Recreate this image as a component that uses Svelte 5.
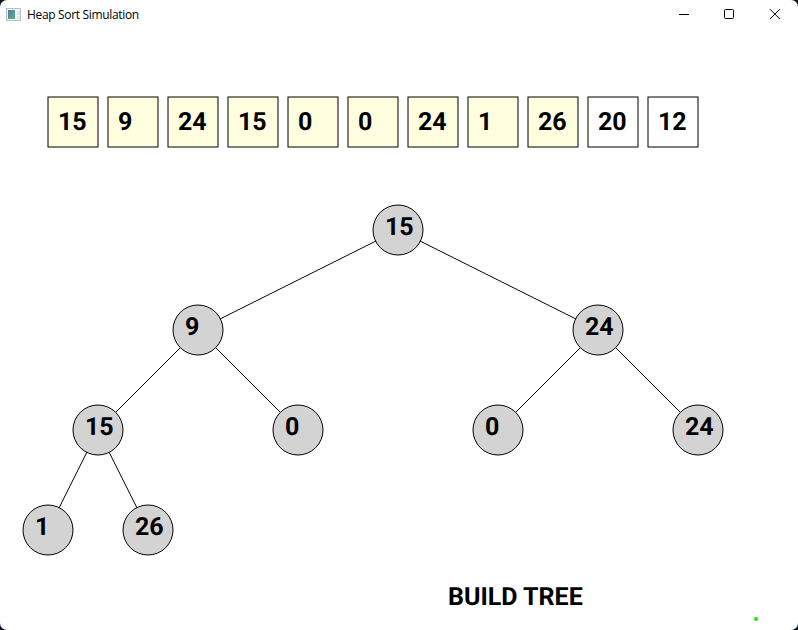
<script>
  const cells = [15, 9, 24, 15, 0, 0, 24, 1, 26, 20, 12];
  const inserted = 9;
  const nodes = [
    { v: 15, x: 398, y: 230 },
    { v: 9, x: 198, y: 330 },
    { v: 24, x: 598, y: 330 },
    { v: 15, x: 98, y: 430 },
    { v: 0, x: 298, y: 430 },
    { v: 0, x: 498, y: 430 },
    { v: 24, x: 698, y: 430 },
    { v: 1, x: 48, y: 530 },
    { v: 26, x: 148, y: 530 }
  ];
  const edges = nodes.slice(1).map((n, i) => ({ a: nodes[Math.floor(i / 2)], b: n }));
</script>

<div class="desktop">
  <div class="window">
    <header>
      <svg class="app" width="16" height="14" viewBox="0 0 16 14">
        <defs>
          <linearGradient id="pane" x1="0" y1="0" x2="1" y2="1">
            <stop offset="0" stop-color="#4b7eab" />
            <stop offset="1" stop-color="#5dae83" />
          </linearGradient>
        </defs>
        <rect x="0.5" y="0.5" width="14" height="12" fill="#f4f5f6" stroke="#b9bdc1" />
        <rect x="2" y="2" width="7" height="9" fill="url(#pane)" />
        <rect x="11" y="3" width="3" height="4" fill="#dce8e5" />
        <rect x="11" y="8" width="3" height="3" fill="#e7e7e7" />
      </svg>
      <span class="title">Heap Sort Simulation</span>
      <div class="controls">
        <svg width="46" height="29" viewBox="0 0 46 29"><path d="M19 14.5h10" /></svg>
        <svg width="46" height="29" viewBox="0 0 46 29"><rect x="18.5" y="9.5" width="9" height="9" rx="1" /></svg>
        <svg width="46" height="29" viewBox="0 0 46 29"><path d="M18 9.2l9.8 9.8M27.8 9.2L18 19" /></svg>
      </div>
    </header>
    <div class="array">
      {#each cells as c, i}
        <svg class="cell" class:filled={i < inserted} width="52" height="52" viewBox="0 0 52 52">
          <rect x="1" y="1" width="50" height="50" />
          <text x="11" y="34">{c}</text>
        </svg>
      {/each}
    </div>
    <svg class="tree" width="798" height="410" viewBox="0 160 798 410">
      {#each edges as e}
        <line x1={e.a.x} y1={e.a.y} x2={e.b.x} y2={e.b.y} />
      {/each}
      {#each nodes as n}
        <circle cx={n.x} cy={n.y} r="25" />
        <text x={n.x - 13} y={n.y + 5}>{n.v}</text>
      {/each}
    </svg>
    <footer>
      <svg class="phase" width="306" height="60" viewBox="0 570 306 60">
        <text x="0" y="605">BUILD TREE</text>
      </svg>
      <i class="dot"></i>
    </footer>
  </div>
</div>

<style>
  :global(body) {
    margin: 0;
  }
  .desktop {
    width: 798px;
    height: 630px;
    overflow: hidden;
    background: #10131c;
  }
  .window {
    display: flex;
    flex-direction: column;
    width: 798px;
    height: 630px;
    border-radius: 7px;
    background: #fff;
    color: #000;
    font-family: Roboto, sans-serif;
    font-weight: 700;
    font-size: 25px;
  }
  text {
    text-rendering: geometricPrecision;
  }
  header {
    display: flex;
    height: 29px;
    align-items: center;
    padding-left: 6px;
    box-sizing: border-box;
  }
  .app {
    margin-right: 5px;
  }
  .title {
    font: 400 12px/29px "Open Sans", "Noto Sans", sans-serif;
    letter-spacing: -0.33px;
    white-space: nowrap;
  }
  .controls {
    display: flex;
    margin-left: auto;
    height: 29px;
  }
  .controls svg {
    fill: none;
    stroke: #000;
    stroke-width: 1;
  }
  .array {
    display: flex;
    gap: 8px;
    height: 52px;
    margin: 67px 0 12px 47px;
  }
  .cell {
    flex: none;
  }
  .cell rect {
    fill: #fff;
    stroke: #000;
    stroke-width: 1;
  }
  .filled rect {
    fill: #ffffe0;
  }
  .tree {
    display: block;
    flex: none;
  }
  .tree line,
  .tree circle {
    stroke: #000;
    stroke-width: 1;
  }
  .tree circle {
    fill: #d3d3d3;
  }
  footer {
    display: flex;
    flex: 1;
    padding-left: 448px;
    align-items: flex-start;
  }
  .phase {
    flex: none;
  }
  .dot {
    width: 4px;
    height: 4px;
    margin-top: 47px;
    border-radius: 50%;
    background: #1be800;
  }
</style>
